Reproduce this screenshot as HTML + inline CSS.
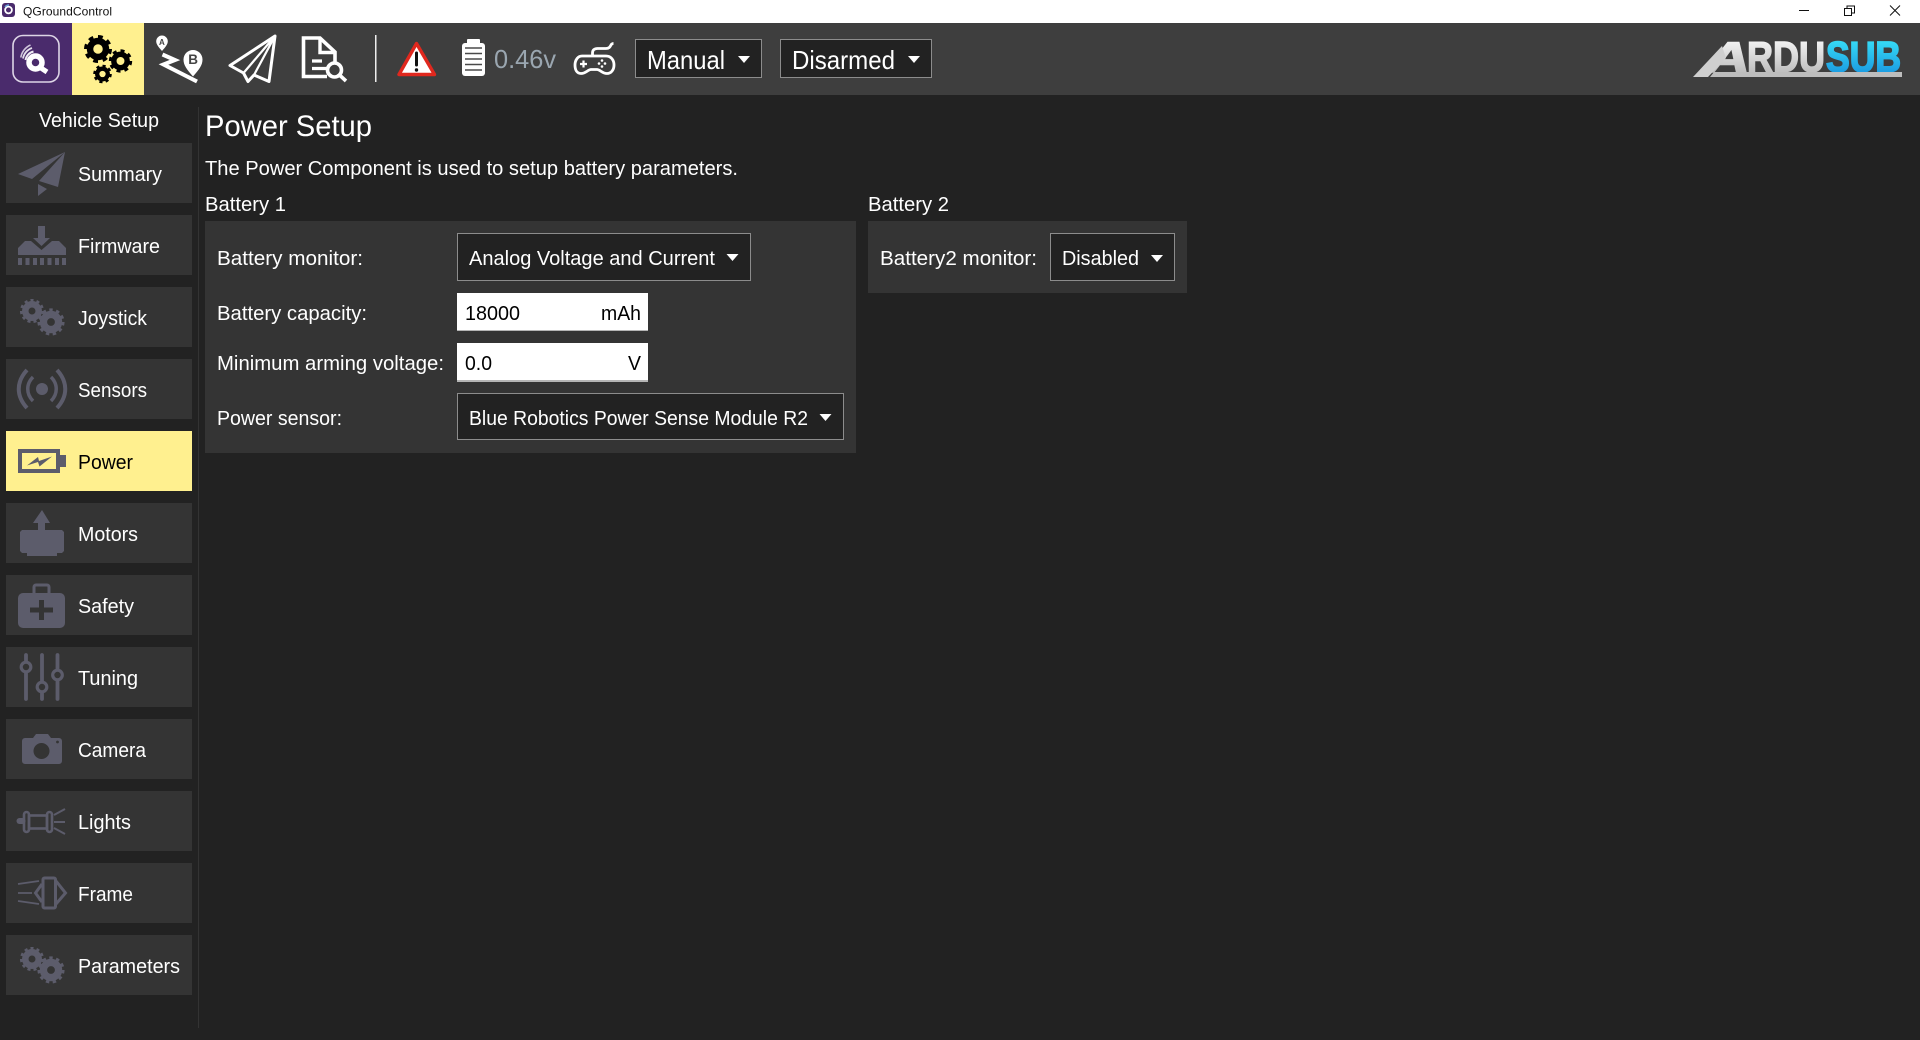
<!DOCTYPE html>
<html><head><meta charset="utf-8"><title>QGroundControl</title>
<style>
html,body{margin:0;padding:0;background:#222;width:1920px;height:1040px;overflow:hidden}
svg{display:block}
text{font-family:"Liberation Sans",sans-serif;fill:#fff;font-size:20.5px}
.c rect{shape-rendering:crispEdges}
</style></head><body>
<svg width="1920" height="1040" viewBox="0 0 1920 1040" xmlns="http://www.w3.org/2000/svg">
<defs>
<linearGradient id="lg" gradientUnits="userSpaceOnUse" x1="0" y1="40" x2="0" y2="73"><stop offset="0" stop-color="#f4f4f4"/><stop offset="1" stop-color="#bdbdbd"/></linearGradient>
<linearGradient id="lb" gradientUnits="userSpaceOnUse" x1="0" y1="40" x2="0" y2="73"><stop offset="0" stop-color="#37dcf6"/><stop offset="1" stop-color="#1b9ce2"/></linearGradient>
<g id="gb"><circle r="5.7" fill="none" stroke="#000" stroke-width="4.6"/><circle r="8.7" fill="none" stroke="#000" stroke-width="2.6" pathLength="16" stroke-dasharray="1 1"/></g>
<g id="gs"><circle r="5.6" fill="none" stroke="#5c5c6b" stroke-width="5.4"/><circle r="8.9" fill="none" stroke="#5c5c6b" stroke-width="2.3" pathLength="22" stroke-dasharray="1 1"/></g>
<path id="arr" d="M-6 0H6L0 7Z" fill="#fff"/>
</defs>
<g class="c">
<rect width="1920" height="1040" fill="#222"/>
<rect width="1920" height="23" fill="#fff"/>
<rect y="23" width="1920" height="72" fill="#3e3e3e"/>
<rect y="23" width="72" height="72" fill="#4a2b6c"/>
<rect x="72" y="23" width="72" height="72" fill="#fff08f"/>
<rect x="198" y="107" width="1" height="921" fill="#333"/>
<rect x="6" y="143" width="186" height="60" fill="#343434"/>
<rect x="6" y="215" width="186" height="60" fill="#343434"/>
<rect x="6" y="287" width="186" height="60" fill="#343434"/>
<rect x="6" y="359" width="186" height="60" fill="#343434"/>
<rect x="6" y="431" width="186" height="60" fill="#fff08f"/>
<rect x="6" y="503" width="186" height="60" fill="#343434"/>
<rect x="6" y="575" width="186" height="60" fill="#343434"/>
<rect x="6" y="647" width="186" height="60" fill="#343434"/>
<rect x="6" y="719" width="186" height="60" fill="#343434"/>
<rect x="6" y="791" width="186" height="60" fill="#343434"/>
<rect x="6" y="863" width="186" height="60" fill="#343434"/>
<rect x="6" y="935" width="186" height="60" fill="#343434"/>
<rect x="205" y="221" width="651" height="232" fill="#343434"/>
<rect x="868" y="221" width="319" height="72" fill="#343434"/>
<rect x="457.5" y="233.5" width="293" height="47" fill="#222" stroke="#8c8c8c"/>
<rect x="457" y="293" width="191" height="38" fill="#fff"/><rect x="457" y="330" width="191" height="1" fill="#b5b5b5"/>
<rect x="457" y="343" width="191" height="38" fill="#fff"/><rect x="457" y="380" width="191" height="2" fill="#b5b5b5"/>
<rect x="457.5" y="393.5" width="386" height="46" fill="#222" stroke="#8c8c8c"/>
<rect x="1050.5" y="233.5" width="124" height="47" fill="#222" stroke="#8c8c8c"/>
<rect x="635.5" y="39.5" width="126" height="38" fill="#222" stroke="#8c8c8c"/>
<rect x="780.5" y="39.5" width="151" height="38" fill="#222" stroke="#8c8c8c"/>
</g>

<!-- title bar -->
<rect x="2" y="3" width="13" height="14" rx="3" fill="#4a2b6c"/>
<circle cx="8.5" cy="10" r="3.4" fill="none" stroke="#fff" stroke-width="1.8"/><path d="M5 7a5 5 0 0 1 4-2" stroke="#6aa0d8" stroke-width="1.4" fill="none"/>
<text x="23" y="15.5" style="font-size:12px;fill:#111" textLength="89">QGroundControl</text>
<path d="M1799 10.5H1809" stroke="#111" stroke-width="1"/>
<path d="M1844.5 8.5h7v7h-7zM1847 8.5v-2.500h7.500v7h-3" fill="none" stroke="#111" stroke-width="1"/>
<path d="M1890 5.500L1900 15.500M1900 5.500L1890 15.500" stroke="#111" stroke-width="1"/>

<!-- toolbar logo -->
<rect x="13" y="35.500" width="46" height="46.500" rx="10" fill="none" stroke="#ddd5e6" stroke-width="1.600"/>
<circle cx="35.500" cy="62.500" r="6.500" fill="none" stroke="#fff" stroke-width="5.500"/>
<path d="M38 66L47 72" stroke="#fff" stroke-width="5"/>
<path d="M25.500 60A10.500 10.500 0 0 1 33.500 51.500" fill="none" stroke="#f0edf4" stroke-width="2"/>
<path d="M23 58.500A13.500 13.500 0 0 1 32 48" fill="none" stroke="#e4dfeb" stroke-width="1.800"/>
<path d="M20.800 57.500A16.500 16.500 0 0 1 30.500 45" fill="none" stroke="#cfc6da" stroke-width="1.600"/>

<!-- gears toolbar -->
<use href="#gb" transform="translate(98 49) scale(1.4)"/>
<use href="#gb" transform="translate(120.500 61) scale(1.17)"/>
<use href="#gb" transform="translate(102.500 74) scale(.93)"/>

<!-- plan -->
<path d="M162 51c-3.500-4-5.800-6.500-5.800-9.700a5.800 5.800 0 0 1 11.600 0c0 3.200-2.300 5.700-5.800 9.700z" fill="#fff"/>
<text x="159" y="45" style="font-size:8px;font-weight:bold;fill:#444">A</text>
<path d="M162.500 54.500L175 60L163.500 64.500L197 81.500" fill="none" stroke="#fff" stroke-width="4"/>
<path d="M193 76.500c-6-7-9.500-11-9.500-17a9.500 9.500 0 0 1 19 0c0 6-3.500 10-9.500 17z" fill="#fff"/>
<text x="188.300" y="64" style="font-size:13.500px;font-weight:bold;fill:#444">B</text>

<!-- fly -->
<path d="M275 36L230 65.500L243.500 73L248 81.500L254 75L269 81.500Z" fill="none" stroke="#fff" stroke-width="3" stroke-linejoin="round"/>
<path d="M275 36L243.500 73M275 36L254 75M243.500 73L248 81.500" fill="none" stroke="#fff" stroke-width="2.200"/>

<!-- analyze -->
<path d="M335 62V52L320 38H303.500V76.500H327" fill="none" stroke="#fff" stroke-width="3.600"/>
<path d="M320 38V52.500H335" fill="none" stroke="#fff" stroke-width="3.400"/>
<path d="M312 61H322M312 68.500H327" stroke="#fff" stroke-width="3.200"/>
<circle cx="334.500" cy="70" r="7" fill="#3e3e3e" stroke="#fff" stroke-width="3.600"/>
<path d="M339.500 75L346 81" stroke="#fff" stroke-width="3.600"/>

<rect x="375" y="35" width="1.500" height="47" fill="#eee"/>

<!-- warning -->
<path d="M416.500 43.500L399 74.500H434.500Z" fill="#fff" stroke="#e0281e" stroke-width="3.400" stroke-linejoin="round"/>
<path d="M416.500 53V65" stroke="#111" stroke-width="3" stroke-linecap="round"/><circle cx="416.500" cy="70" r="1.700" fill="#111"/>

<!-- battery -->
<rect x="467" y="39" width="13" height="5" rx="1" fill="#fff"/>
<rect x="462" y="43" width="23" height="33" rx="3" fill="#fff"/>
<path d="M465 48H482M465 53.500H482M465 59H482M465 64.500H482M465 70H482" stroke="#4a4a4a" stroke-width="1.600"/>
<text x="494" y="68" style="font-size:26px;fill:#9aa6b0" textLength="62" lengthAdjust="spacingAndGlyphs">0.46v</text>

<!-- joystick -->
<path d="M582 56H606C611 56 614 60 614 65C614 70 611 73.500 607 73.500C602 73.500 600 69.500 597 69.500H591C588 69.500 586 73.500 581 73.500C577 73.500 575 70 575 65C575 60 578 56 582 56Z" fill="none" stroke="#fff" stroke-width="2.800" stroke-linejoin="round"/>
<path d="M592.500 55V53C592.500 50 594.500 48.500 597.500 48.500H606C609 48.500 610 47 611 45C611.500 44 612 43.500 613.500 43.500" fill="none" stroke="#fff" stroke-width="2.800"/>
<path d="M583.500 60.500V67.500M580 64H587" stroke="#fff" stroke-width="2.200"/>
<circle cx="602" cy="60.500" r="1.300" fill="#fff"/><circle cx="602" cy="66.500" r="1.300" fill="#fff"/><circle cx="599" cy="63.500" r="1.300" fill="#fff"/><circle cx="605" cy="63.500" r="1.300" fill="#fff"/>

<text x="647" y="69" style="font-size:26px" textLength="78" lengthAdjust="spacingAndGlyphs">Manual</text>
<use href="#arr" transform="translate(744 56)"/>
<text x="792" y="69" style="font-size:26px" textLength="103" lengthAdjust="spacingAndGlyphs">Disarmed</text>
<use href="#arr" transform="translate(914 56)"/>

<!-- ardusub logo -->
<text x="1706" y="72" style="font-size:43px;font-weight:bold;font-style:italic;fill:url(#lg);stroke:url(#lg);stroke-width:1.500" textLength="44" lengthAdjust="spacingAndGlyphs">A</text>
<text x="1747" y="71.500" style="font-size:43px;font-weight:bold;fill:url(#lg);stroke:url(#lg);stroke-width:1.500" textLength="78" lengthAdjust="spacingAndGlyphs">RDU</text>
<text x="1826" y="71.500" style="font-size:43px;font-weight:bold;fill:url(#lb);stroke:url(#lb);stroke-width:1.800" textLength="75" lengthAdjust="spacingAndGlyphs">SUB</text>
<path d="M1693 77L1722 46L1726 58L1708 77Z" fill="#cfcfcf"/>
<path d="M1710 77L1714 72H1902V77Z" fill="#bdbdbd"/>

<!-- sidebar -->
<text x="39" y="127" textLength="120" lengthAdjust="spacingAndGlyphs">Vehicle Setup</text>
<text x="78" y="181" textLength="84" lengthAdjust="spacingAndGlyphs">Summary</text>
<text x="78" y="253" textLength="82" lengthAdjust="spacingAndGlyphs">Firmware</text>
<text x="78" y="325" textLength="69" lengthAdjust="spacingAndGlyphs">Joystick</text>
<text x="78" y="397" textLength="69" lengthAdjust="spacingAndGlyphs">Sensors</text>
<text x="78" y="469" style="fill:#000" textLength="55" lengthAdjust="spacingAndGlyphs">Power</text>
<text x="78" y="541" textLength="60" lengthAdjust="spacingAndGlyphs">Motors</text>
<text x="78" y="613" textLength="56" lengthAdjust="spacingAndGlyphs">Safety</text>
<text x="78" y="685" textLength="60" lengthAdjust="spacingAndGlyphs">Tuning</text>
<text x="78" y="757" textLength="68" lengthAdjust="spacingAndGlyphs">Camera</text>
<text x="78" y="829" textLength="53" lengthAdjust="spacingAndGlyphs">Lights</text>
<text x="78" y="901" textLength="55" lengthAdjust="spacingAndGlyphs">Frame</text>
<text x="78" y="973" textLength="102" lengthAdjust="spacingAndGlyphs">Parameters</text>

<g fill="#5c5c6b">
<!-- summary -->
<path d="M65 152L18 174L32 179ZM65 152L39 181L58 187ZM38 184V196L47 189Z"/>
<!-- firmware -->
<path d="M38 226H45V238H50L41.500 246L33 238H38Z"/>
<path d="M25 241H31L41.500 250L52 241H59L66 248V255H18V248Z"/>
<path d="M18 258h4v7h-4zM25.500 258h4v7h-4zM33 258h4v7h-4zM40 258h4v7h-4zM47.500 258h4v7h-4zM55 258h4v7h-4zM62 258h4v7h-4z"/>
<!-- power -->
<path d="M60 455h6v12h-6z"/>
<path d="M27 465.500L38 457L39 461L52 456.500L39.500 466.500L38 462Z"/>
<!-- motors -->
<path d="M42 510L50 523H45V530H62L64 532V551L62 553H57V556H27V553H22L20 551V532L22 530H38V523H33Z"/>
<!-- safety -->
<rect x="18" y="593" width="47" height="35" rx="5"/>
<!-- camera -->
<path d="M25 738H33L36 734H48L51 738H59a3 3 0 0 1 3 3V761a3 3 0 0 1-3 3H25a3 3 0 0 1-3-3V741a3 3 0 0 1 3-3z"/>
<!-- sensors dot -->
<circle cx="42" cy="389" r="6"/>
</g>
<!-- power outline -->
<rect x="20" y="451" width="38" height="20" fill="none" stroke="#5c5c6b" stroke-width="4"/>
<!-- sensors arcs -->
<path d="M27 370C16 382 16 396 27 408M57 370C68 382 68 396 57 408" fill="none" stroke="#5c5c6b" stroke-width="4"/>
<path d="M33 377C26 384 26 394 33 401M51 377C58 384 58 394 51 401" fill="none" stroke="#5c5c6b" stroke-width="3.500"/>
<!-- safety detail -->
<path d="M34 593v-6a2 2 0 0 1 2-2h11a2 2 0 0 1 2 2v6" fill="none" stroke="#5c5c6b" stroke-width="3"/>
<path d="M41.500 600V620M30 610H53" stroke="#343434" stroke-width="5"/>
<!-- tuning -->
<path d="M26 655V699M42 655V699M57.500 655V699" stroke="#5c5c6b" stroke-width="3.800" stroke-linecap="round"/>
<circle cx="26" cy="667" r="4.800" fill="#343434" stroke="#5c5c6b" stroke-width="3.200"/>
<circle cx="42" cy="687" r="4.800" fill="#343434" stroke="#5c5c6b" stroke-width="3.200"/>
<circle cx="57.500" cy="675" r="4.800" fill="#343434" stroke="#5c5c6b" stroke-width="3.200"/>
<!-- camera detail -->
<circle cx="41.500" cy="751" r="8" fill="#343434"/><circle cx="57.500" cy="742" r="1.400" fill="#343434"/>
<!-- lights -->
<path d="M19.500 821h3" stroke="#5c5c6b" stroke-width="6" stroke-linecap="round"/>
<rect x="24" y="812" width="5" height="20" rx="2.500" fill="none" stroke="#5c5c6b" stroke-width="2.600"/>
<rect x="47" y="812" width="5" height="20" rx="2.500" fill="none" stroke="#5c5c6b" stroke-width="2.600"/>
<rect x="29" y="815.500" width="18" height="13" fill="none" stroke="#5c5c6b" stroke-width="2.600"/>
<path d="M54 815L65 809M54 822H65M54 828L65 834" stroke="#5c5c6b" stroke-width="2"/>
<!-- frame -->
<rect x="43" y="878" width="12.500" height="30" rx="1.500" fill="none" stroke="#5c5c6b" stroke-width="3"/>
<path d="M42 884L35.500 893L42 902M56 881L65.500 893L56 904" fill="none" stroke="#5c5c6b" stroke-width="3"/>
<path d="M18 884L39 881M18 893H32M18 901L39 904" stroke="#5c5c6b" stroke-width="1.800"/>
<!-- gears -->
<use href="#gs" transform="translate(32 311) scale(1.2)"/>
<use href="#gs" transform="translate(51 322) scale(1.35)"/>
<use href="#gs" transform="translate(32 959) scale(1.2)"/>
<use href="#gs" transform="translate(51 970) scale(1.35)"/>

<!-- content -->
<text x="205" y="136" style="font-size:30px" textLength="167" lengthAdjust="spacingAndGlyphs">Power Setup</text>
<text x="205" y="175" textLength="533" lengthAdjust="spacingAndGlyphs">The Power Component is used to setup battery parameters.</text>
<text x="205" y="211" textLength="81" lengthAdjust="spacingAndGlyphs">Battery 1</text>
<text x="868" y="211" textLength="81" lengthAdjust="spacingAndGlyphs">Battery 2</text>
<text x="217" y="265" textLength="146" lengthAdjust="spacingAndGlyphs">Battery monitor:</text>
<text x="217" y="320" textLength="150" lengthAdjust="spacingAndGlyphs">Battery capacity:</text>
<text x="217" y="370" textLength="227" lengthAdjust="spacingAndGlyphs">Minimum arming voltage:</text>
<text x="217" y="425" textLength="125" lengthAdjust="spacingAndGlyphs">Power sensor:</text>
<text x="469" y="265" textLength="246" lengthAdjust="spacingAndGlyphs">Analog Voltage and Current</text>
<use href="#arr" transform="translate(732.500 254)"/>
<text x="465" y="320" style="fill:#000" textLength="55" lengthAdjust="spacingAndGlyphs">18000</text>
<text x="601" y="320" style="fill:#000" textLength="40" lengthAdjust="spacingAndGlyphs">mAh</text>
<text x="465" y="370" style="fill:#000" textLength="27" lengthAdjust="spacingAndGlyphs">0.0</text>
<text x="628" y="370" style="fill:#000" textLength="13" lengthAdjust="spacingAndGlyphs">V</text>
<text x="469" y="425" textLength="339" lengthAdjust="spacingAndGlyphs">Blue Robotics Power Sense Module R2</text>
<use href="#arr" transform="translate(825.500 414)"/>
<text x="880" y="265" textLength="157" lengthAdjust="spacingAndGlyphs">Battery2 monitor:</text>
<text x="1062" y="265" textLength="77" lengthAdjust="spacingAndGlyphs">Disabled</text>
<use href="#arr" transform="translate(1157 255)"/>
</svg>
</body></html>
